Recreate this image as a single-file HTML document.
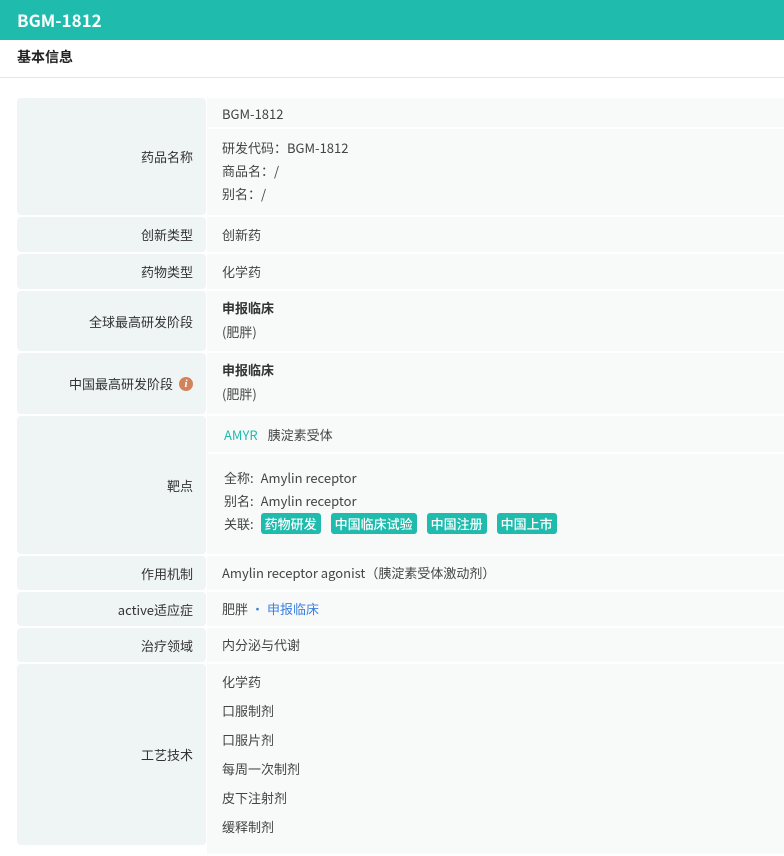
<!DOCTYPE html>
<html><head><meta charset="utf-8"><style>
*{margin:0;padding:0;box-sizing:border-box}
body{width:784px;height:841px;overflow:hidden;background:#fff;font-family:"Noto Sans CJK SC","Liberation Sans",sans-serif;font-size:13px;color:#444}
.top{height:40px;background:#1fbcae;color:#fff;font-weight:bold;font-size:17px;line-height:40px;padding-left:17px}
.sec{height:38px;border-bottom:1px solid #e6e6e6;font-weight:bold;font-size:14px;line-height:34px;padding-left:17px;color:#222}
.tbl{position:absolute;left:17px;top:98px;width:780px}
.row{display:flex;margin-bottom:2px}
.lab{width:189px;background:#eef5f4;border-radius:4px;text-align:right;padding-right:13px;display:flex;align-items:center;justify-content:flex-end;color:#333}
.val{flex:1;margin-left:1px;background:#f8fafa}
.val .p{padding:0 15px}
.sub{border-bottom:2px solid #fff}
b{font-weight:bold;color:#333}
.tag{display:inline-block;background:#1fbcae;color:#fff;border-radius:3px;padding:0 4px;height:21px;line-height:21px;margin-right:10px;font-weight:500}
.teal{color:#1fbcae}.blue{color:#3b7fe0}
.i{display:inline-block;width:14px;height:14px;border-radius:50%;background:#d3835a;color:#fff;font-size:11px;font-style:italic;text-align:center;line-height:14px;margin-left:6px;font-family:"Liberation Serif",serif;font-weight:bold}
</style></head><body>
<div class="top">BGM-1812</div>
<div class="sec">基本信息</div>
<div class="tbl">
<div class="row" style="height:117px"><div class="lab">药品名称</div><div class="val">
<div class="p sub" style="height:31px;line-height:31px">BGM-1812</div>
<div class="p" style="padding-top:7px;line-height:23px">研发代码：BGM-1812<br>商品名：/<br>别名：/</div></div></div>
<div class="row" style="height:35px"><div class="lab">创新类型</div><div class="val" style="line-height:35px;padding-left:15px">创新药</div></div>
<div class="row" style="height:35px"><div class="lab">药物类型</div><div class="val" style="line-height:35px;padding-left:15px">化学药</div></div>
<div class="row" style="height:60px"><div class="lab">全球最高研发阶段</div><div class="val" style="padding:5px 15px;line-height:24px"><b>申报临床</b><br>(肥胖)</div></div>
<div class="row" style="height:61px"><div class="lab">中国最高研发阶段<span class="i">i</span></div><div class="val" style="padding:5px 15px;line-height:24px"><b>申报临床</b><br>(肥胖)</div></div>
<div class="row" style="height:138px"><div class="lab">靶点</div><div class="val">
<div class="p sub" style="height:38px;line-height:38px;padding-left:17px"><span class="teal">AMYR</span><span style="margin-left:10px">胰淀素受体</span></div>
<div class="p" style="padding-top:12px;line-height:23px;padding-left:17px">全称:<span style="margin-left:7px">Amylin receptor</span><br>别名:<span style="margin-left:7px">Amylin receptor</span><br>关联:<span style="margin-left:7px"></span><span class="tag">药物研发</span><span class="tag">中国临床试验</span><span class="tag">中国注册</span><span class="tag">中国上市</span></div></div></div>
<div class="row" style="height:34px"><div class="lab">作用机制</div><div class="val" style="line-height:34px;padding-left:15px">Amylin receptor agonist（胰淀素受体激动剂）</div></div>
<div class="row" style="height:34px"><div class="lab">active适应症</div><div class="val" style="line-height:34px;padding-left:15px">肥胖<span class="blue" style="margin-left:3px">•</span><span class="blue" style="margin-left:3px">申报临床</span></div></div>
<div class="row" style="height:34px"><div class="lab">治疗领域</div><div class="val" style="line-height:34px;padding-left:15px">内分泌与代谢</div></div>
<div class="row" style="height:190px"><div class="lab" style="height:181px">工艺技术</div><div class="val" style="padding:3px 15px;line-height:29px">化学药<br>口服制剂<br>口服片剂<br>每周一次制剂<br>皮下注射剂<br>缓释制剂</div></div>
</div>
</body></html>
